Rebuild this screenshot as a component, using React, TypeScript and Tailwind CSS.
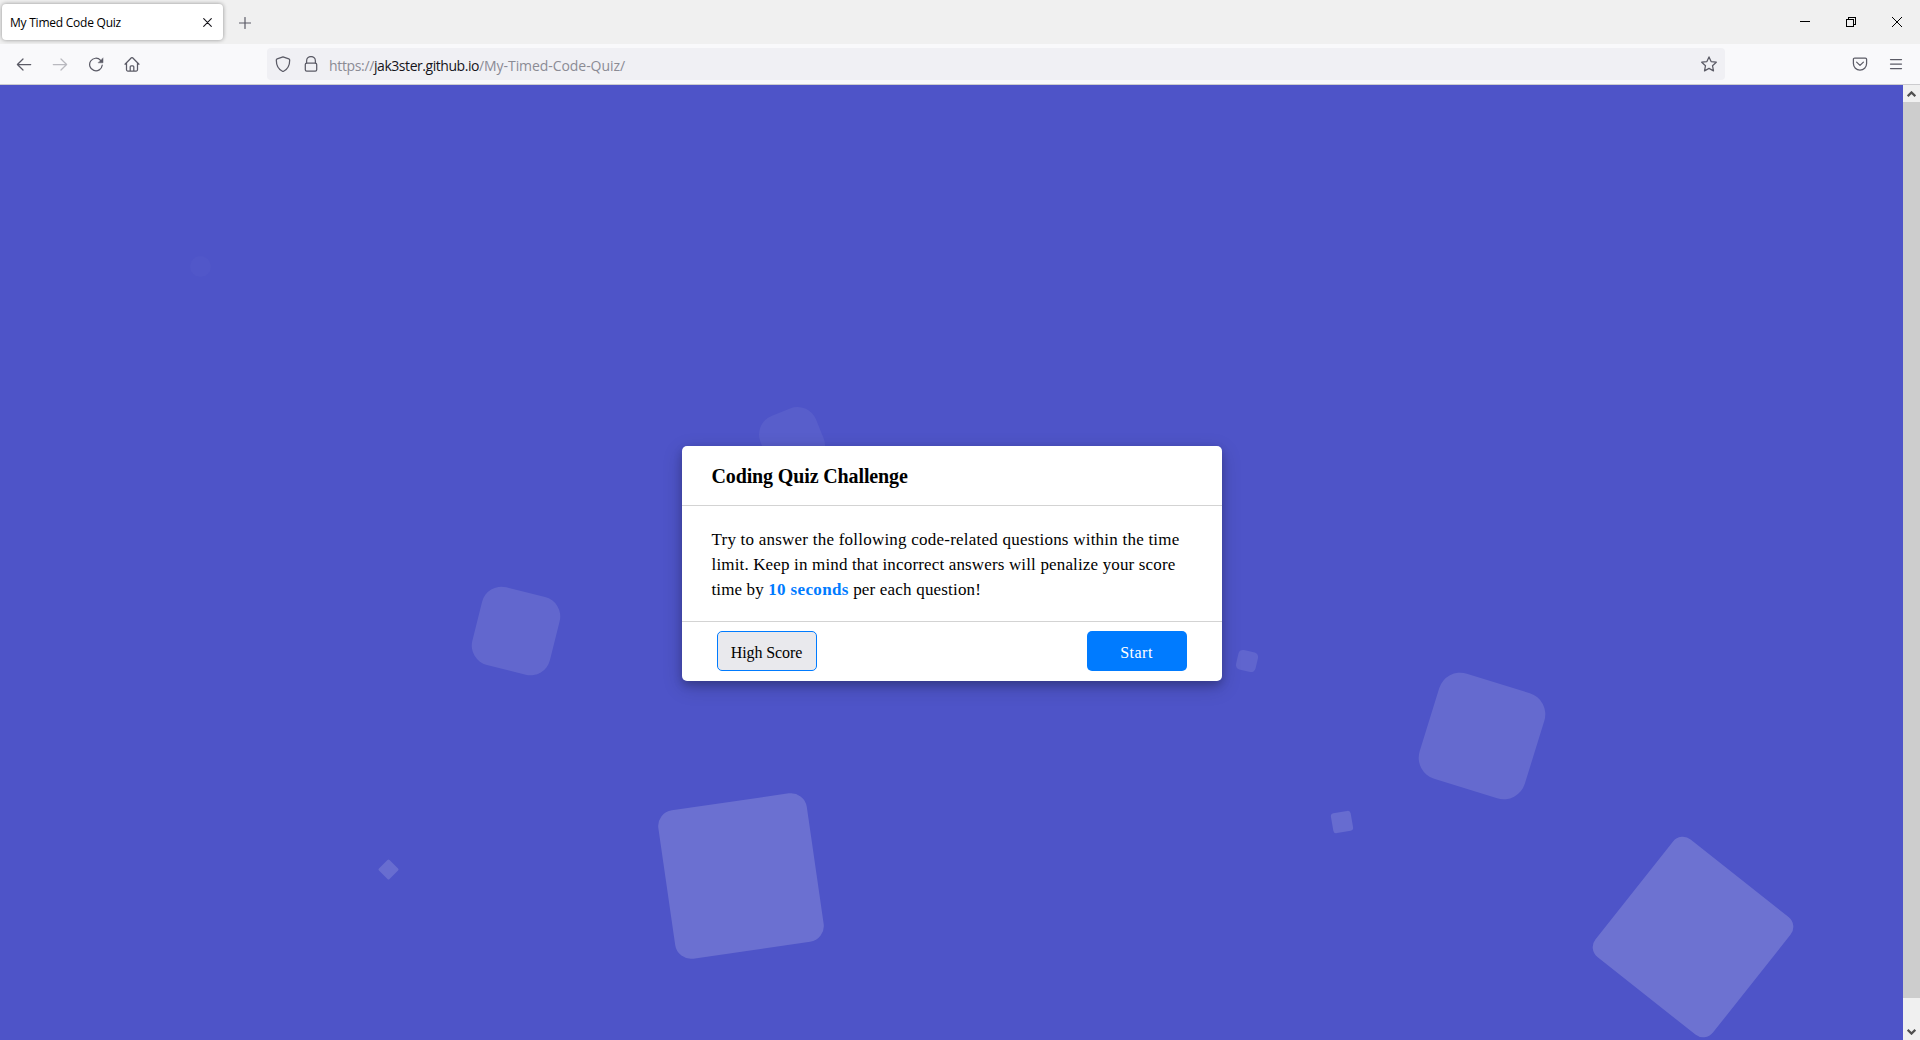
import type { ReactNode } from 'react';

function Icon({ children, className = '' }: { children: ReactNode; className?: string }) {
  return (
    <svg
      viewBox="0 0 16 16"
      className={`size-4 shrink-0 ${className}`}
      fill="none"
      stroke="currentColor"
      strokeWidth="1.25"
      strokeLinecap="round"
      strokeLinejoin="round"
    >
      {children}
    </svg>
  );
}

function TabBar() {
  return (
    <div className="flex h-11 items-start bg-[#f0f0f0]">
      <div className="mt-1 ml-0.5 flex h-9 w-[221px] items-center justify-between rounded bg-white pr-[11.5px] pl-2 shadow-[0_0_4px_rgba(0,0,0,0.4)]">
        <span className="pt-0.5 text-[12px] tracking-[-0.233px] whitespace-nowrap text-black">My Timed Code Quiz</span>
        <svg viewBox="0 0 9 9" className="size-[9px]" stroke="#15141a" strokeWidth="1.1" strokeLinecap="round">
          <path d="M.7.7l7.6 7.6M8.3.7L.7 8.3" />
        </svg>
      </div>
      <svg viewBox="0 0 12 12" className="mt-[16.5px] ml-[15.5px] size-3" stroke="#5b5b66" strokeWidth="1.2" strokeLinecap="round">
        <path d="M6 .5v11M.5 6h11" />
      </svg>
      <div className="mt-[17px] mr-[18px] ml-auto flex items-center gap-9">
        <svg viewBox="0 0 10 10" className="size-2.5" stroke="#000" shapeRendering="crispEdges">
          <path d="M0 4.5h10" />
        </svg>
        <svg viewBox="0 0 10 10" className="size-2.5" stroke="#000" fill="none" shapeRendering="crispEdges">
          <path d="M.5 2.5h7v7h-7zM2.5 2.5v-2h7v7h-2" />
        </svg>
        <svg viewBox="0 0 10 10" className="size-2.5" stroke="#000">
          <path d="M0 0l10 10M10 0L0 10" />
        </svg>
      </div>
    </div>
  );
}

function NavBar() {
  return (
    <div className="flex h-[41px] items-center border-b border-[#cccccf] bg-[#f9f9fb] text-[#5b5b66]">
      <div className="ml-4 flex gap-5">
        <Icon>
          <path d="M14.7 8.5H1.5M7 3L1.4 8.5 7 14" />
        </Icon>
        <Icon className="opacity-40">
          <path d="M1.3 8.5h13.2M9 3l5.6 5.5L9 14" />
        </Icon>
        <Icon>
          <path d="M14.2 9.2A6.3 6.3 0 1 1 12.6 4.3" />
          <path d="M15 2.2v4.6h-4.6z" fill="currentColor" strokeWidth="0.5" />
        </Icon>
        <Icon className="overflow-visible">
          <path d="M1 8.2L7.4 1.8a.9.9 0 0 1 1.2 0L15 8.2M2.5 7v6.8c0 .7.5 1.2 1.2 1.2h8.6c.7 0 1.2-.5 1.2-1.2V7M6.2 15v-4.2c0-.6.4-1 1-1h1.6c.6 0 1 .4 1 1V15" />
        </Icon>
      </div>
      <div className="ml-[127px] flex h-8 w-[1458px] items-center rounded bg-[#f0f0f4] pr-2">
        <Icon className="ml-2">
          <path d="M8 .8l5.8 2.1c.5.2.9.7.9 1.2 0 5.5-2.2 9.3-6.1 11.2a1.3 1.3 0 0 1-1.2 0C3.5 13.4 1.3 9.6 1.3 4.1c0-.5.4-1 .9-1.2z" />
        </Icon>
        <Icon className="ml-3">
          <path d="M3.6 7V4.9a4.4 4.4 0 0 1 8.8 0V7" />
          <rect x="2.3" y="7.2" width="11.4" height="8" rx="1.4" />
        </Icon>
        <div className="ml-2.5 flex pt-0.5 text-[14px] whitespace-nowrap text-[#8b8b94]">
          <span className="tracking-[-0.344px]">https://</span>
          <span className="tracking-[-0.45px] text-[#15141a]">jak3ster.github.io</span>
          <span className="tracking-[-0.063px]">/My-Timed-Code-Quiz/</span>
        </div>
        <Icon className="ml-auto overflow-visible">
          <path d="M8 .9l2.1 4.7 5.2.6-3.8 3.5 1 5.2L8 12.4l-4.5 2.5 1-5.2L.7 6.2l5.2-.6z" />
        </Icon>
      </div>
      <div className="mr-4 ml-auto flex items-center gap-5">
        <Icon className="overflow-visible">
          <path d="M2.7 2h10.6c.7 0 1.3.6 1.3 1.3V7.600a6.600 6.600 0 0 1-13.200 0V3.300C1.400 2.600 2 2 2.700 2zM4.600 6.100L8 9.400l3.400-3.300" />
        </Icon>
        <Icon>
          <path d="M2.500 3.500h11M2.500 8h11M2.500 12.500h11" />
        </Icon>
      </div>
    </div>
  );
}

const squares = [
  'left-[190px] top-[170.5px] size-[21px] rounded-full bg-white/[0.02]',
  'left-[761.5px] top-[325px] size-[60px] -rotate-[22deg] rounded-[20px] bg-white/[0.06]',
  'left-[476px] top-[506px] size-[80px] rotate-[14deg] rounded-[20px] bg-white/[0.115]',
  'left-[1237px] top-[566px] size-[20px] rotate-[13deg] rounded-[4.5px] bg-white/10',
  'left-[1427px] top-[596px] size-[110px] rotate-[17.2deg] rounded-[22px] bg-white/[0.13]',
  'left-[1332px] top-[726.5px] size-[20px] -rotate-[10deg] rounded-[3px] bg-white/[0.14]',
  'left-[381px] top-[776.5px] size-[15px] rotate-45 rounded-[1.5px] bg-white/[0.15]',
  'left-[666px] top-[716px] size-[150px] -rotate-[8.2deg] rounded-[16px] bg-white/[0.165]',
  'left-[1618px] top-[776.5px] size-[150px] rotate-[38.4deg] rounded-[12.5px] bg-white/[0.175]',
];

function QuizCard() {
  return (
    <section className="relative flex h-[235px] w-[540px] flex-col rounded-[5px] bg-white font-['Liberation_Serif',serif] text-black shadow-[0_4px_8px_0_rgba(0,0,0,0.2),0_6px_20px_0_rgba(0,0,0,0.19)]">
      <header className="flex h-[60px] items-center border-b border-[#d3d3d3] px-[30px]">
        <h1 className="text-[20px] font-bold tracking-[-0.13px]">Coding Quiz Challenge</h1>
      </header>
      <div className="flex-1 px-[30px] pt-[21px] text-[17px] leading-[25px] whitespace-nowrap">
        <p className="tracking-[0.226px]">Try to answer the following code-related questions within the time</p>
        <p className="tracking-[0.154px]">limit. Keep in mind that incorrect answers will penalize your score</p>
        <p className="tracking-[0.12px]">
          time by <strong className="tracking-[0.36px] text-[#007bff]">10 seconds</strong>{' '}
          <span className="tracking-[0.188px]">per each question!</span>
        </p>
      </div>
      <footer className="flex h-[60px] items-center justify-between border-t border-[#d3d3d3] px-[35px] pb-px text-[16px]">
        <button className="h-10 w-[100px] rounded-[5px] border border-[#007bff] bg-[#e9e9ed] pt-1 tracking-[-0.1px]">
          High Score
        </button>
        <button className="h-10 w-[100px] rounded-[5px] bg-[#007bff] pt-1 tracking-[0.5px] text-white">Start</button>
      </footer>
    </section>
  );
}

function ScrollBar() {
  return (
    <div className="flex w-[17px] flex-col bg-[#f0f0f0]">
      <div className="flex h-[17px] items-center justify-center">
        <svg viewBox="0 0 9 6" className="h-1.5 w-[9px]" fill="none" stroke="#505050" strokeWidth="2.2">
          <path d="M.7 5.200L4.500 1.400l3.800 3.800" />
        </svg>
      </div>
      <div className="h-[896px] bg-[#cdcdcd]" />
      <div className="mt-auto flex h-[17px] items-center justify-center">
        <svg viewBox="0 0 9 6" className="h-1.5 w-[9px]" fill="none" stroke="#505050" strokeWidth="2.2">
          <path d="M.7.8l3.800 3.800L8.300.8" />
        </svg>
      </div>
    </div>
  );
}

export default function App() {
  return (
    <div className="flex h-[1040px] w-[1920px] flex-col overflow-hidden font-['Open_Sans',sans-serif]">
      <TabBar />
      <NavBar />
      <div className="flex min-h-0 flex-1">
        <main className="relative flex flex-1 justify-center overflow-hidden bg-[#4e54c8] pt-[361px]">
          {squares.map((square) => (
            <div key={square} className={`absolute ${square}`} />
          ))}
          <QuizCard />
        </main>
        <ScrollBar />
      </div>
    </div>
  );
}
